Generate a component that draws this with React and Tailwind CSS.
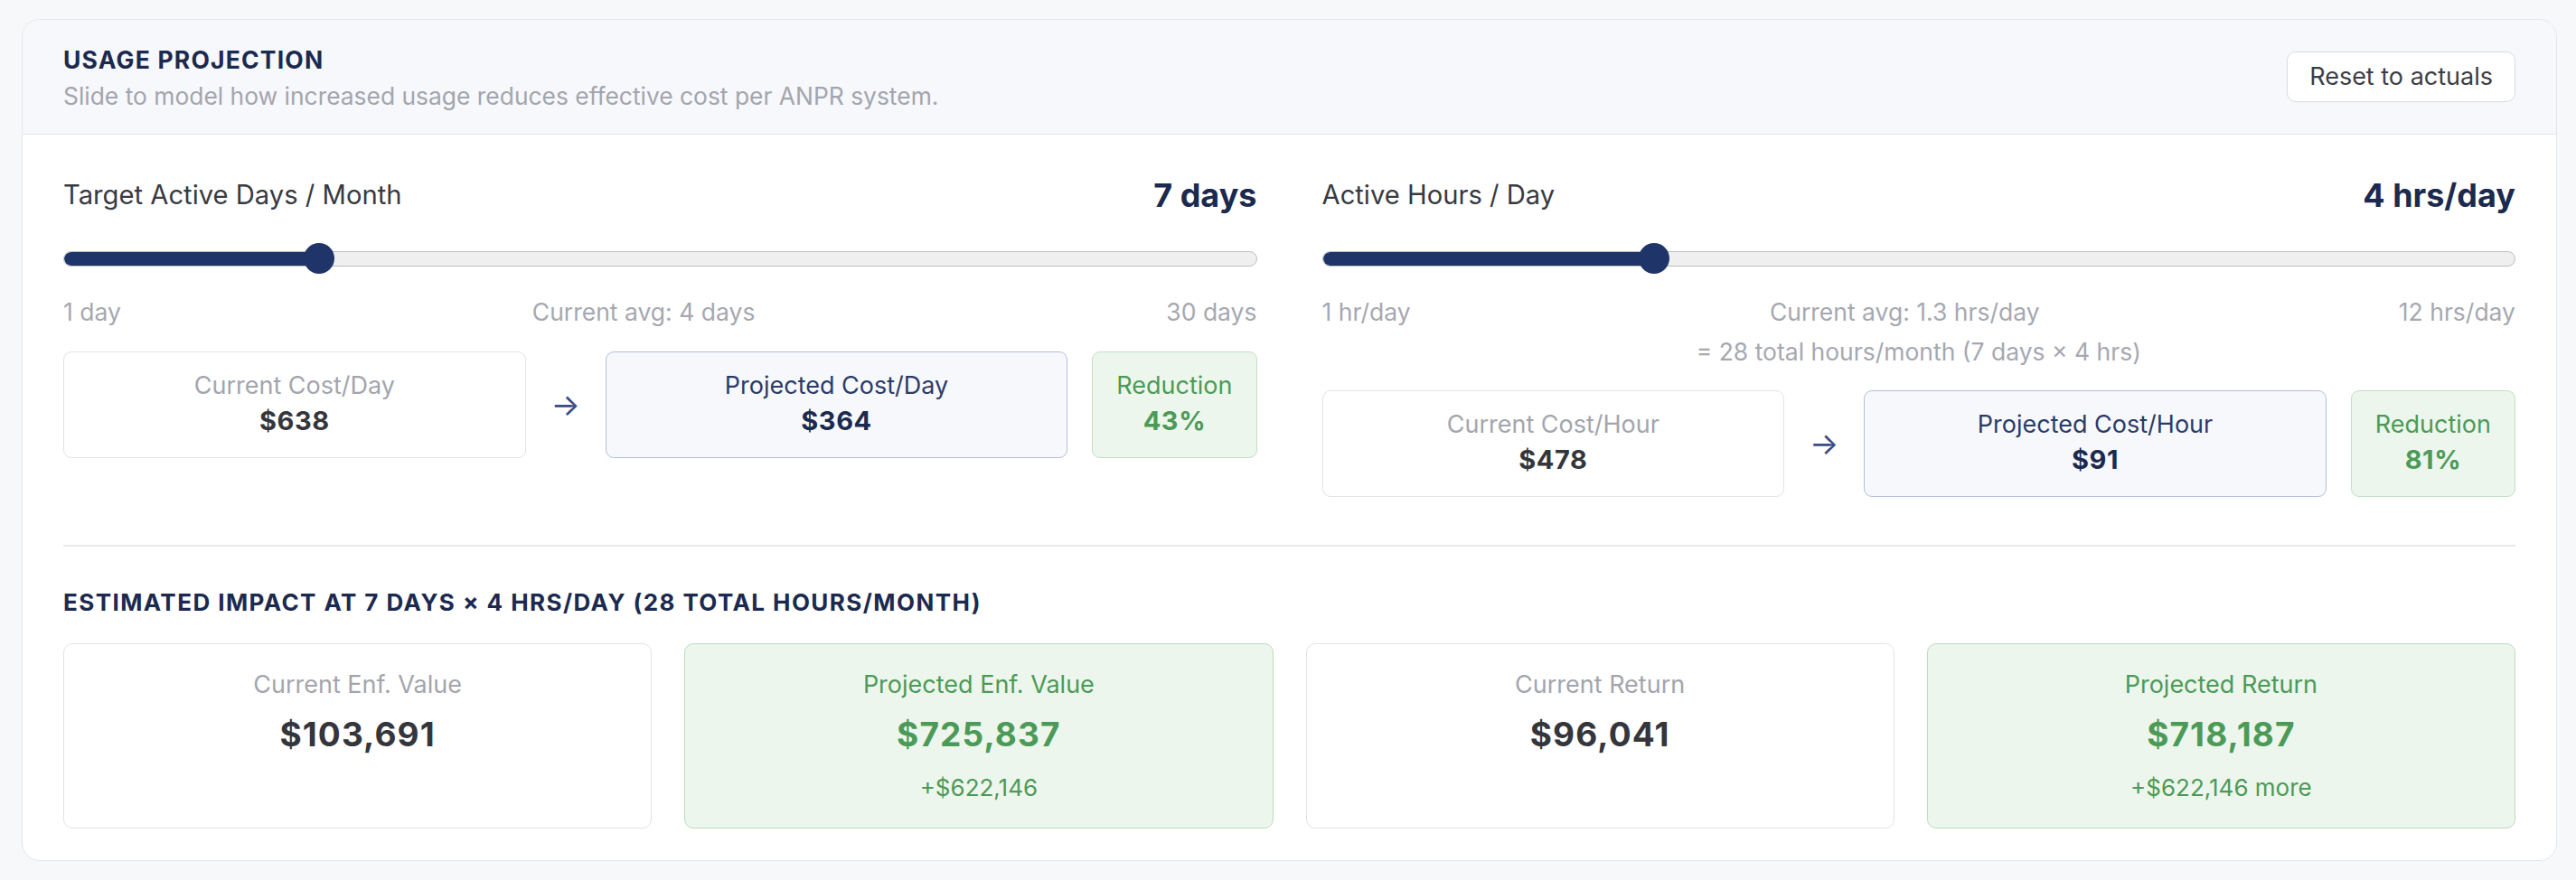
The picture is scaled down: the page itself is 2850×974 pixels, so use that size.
import React from "react";

function Slider({ pct }) {
  return (
    <div className="relative flex h-[34px] items-center">
      <div className="relative h-[17px] w-full overflow-hidden rounded-full border border-[#bcbcbc] bg-[#efefef]">
        <div
          className="h-full rounded-full bg-[#1f3468]"
          style={{ width: `calc(17px + ${pct} * (100% - 34px))` }}
        />
      </div>
      <div
        className="absolute top-0 h-[34px] w-[34px] rounded-full bg-[#1f3468]"
        style={{ left: `calc(${pct} * (100% - 34px))` }}
      />
    </div>
  );
}

function StatBox({ label, value, variant, grow = true }) {
  const styles = {
    current: "border-[#e3e3e6] bg-white",
    projected: "border-[#b3c0d9] bg-[#f6f8fc]",
    reduction: "border-[#c3dec4] bg-[#edf6ed]",
  };
  const labelC = {
    current: "text-[#a3a5ad]",
    projected: "text-[#2b3b68]",
    reduction: "text-[#4c9a57]",
  };
  const valueC = {
    current: "text-[#35363c]",
    projected: "text-[#1b2a4e]",
    reduction: "text-[#4c9a57]",
  };
  return (
    <div
      className={`${grow ? "flex-1" : "px-[26px]"} rounded-[9px] border pb-[20px] pt-[20px] text-center ${styles[variant]}`}
    >
      <div className={`text-[27px] leading-[34px] ${labelC[variant]}`}>{label}</div>
      <div className={`mt-[2px] text-[29px] font-bold leading-[40px] tracking-[0.02em] ${valueC[variant]}`}>{value}</div>
    </div>
  );
}

function SliderColumn({ label, value, pct, min, avg, max, extra, cur, proj, red }) {
  return (
    <div className="flex flex-col">
      <div className="flex h-[40px] items-center justify-between">
        <span className="text-[29.2px] leading-[40px] text-[#383a42]">{label}</span>
        <span className="text-[36px] font-bold leading-[40px] text-[#1b2a4e]">{value}</span>
      </div>
      <div className="mt-[33px]">
        <Slider pct={pct} />
      </div>
      <div className="mt-[25px] flex justify-between text-[26.5px] leading-[34px] text-[#a6a8b0]">
        <span>{min}</span>
        <span>{avg}</span>
        <span>{max}</span>
      </div>
      {extra && (
        <div className="mt-[10px] text-center text-[26.5px] leading-[34px] text-[#a6a8b0]">{extra}</div>
      )}
      <div className={`${extra ? "mt-[26px]" : "mt-[27px]"} flex items-center gap-[27px]`}>
        <StatBox label={cur[0]} value={cur[1]} variant="current" />
        <div className="w-[34px] text-center text-[34px] leading-[34px] text-[#3c4d85]">→</div>
        <StatBox label={proj[0]} value={proj[1]} variant="projected" />
        <StatBox label="Reduction" value={red} variant="reduction" grow={false} />
      </div>
    </div>
  );
}

function ImpactCard({ label, value, sub, green }) {
  return (
    <div
      className={`rounded-[10px] border px-[20px] pb-[27px] pt-[28px] text-center ${
        green ? "border-[#bddcbe] bg-[#edf6ed]" : "border-[#e2e3e6] bg-white"
      }`}
    >
      <div className={`text-[27px] leading-[34px] ${green ? "text-[#4c9a57]" : "text-[#a3a5ad]"}`}>{label}</div>
      <div
        className={`mt-[16px] text-[37px] font-bold leading-[44px] tracking-[0.03em] ${
          green ? "text-[#4c9a57]" : "text-[#35363c]"
        }`}
      >
        {value}
      </div>
      {sub && <div className="mt-[20px] text-[26px] leading-[34px] text-[#4c9a57]">{sub}</div>}
    </div>
  );
}

export default function App() {
  return (
    <div className="min-h-screen bg-[#f7f8fa] pb-[20px] pl-[24px] pr-[21px] pt-[21px] font-['Inter',sans-serif]">
      <div className="overflow-hidden rounded-[20px] border border-[#e3e5ea] bg-white">
        <header className="flex h-[127px] items-center justify-between border-b border-[#e3e5ea] bg-[#f7f8fc] px-[45px]">
          <div className="pt-[2px]">
            <h2 className="text-[26.5px] font-bold leading-[36px] tracking-[0.045em] text-[#1b2a4e]">USAGE PROJECTION</h2>
            <p className="mt-[4px] text-[26.4px] leading-[36px] text-[#a3a5ad]">
              Slide to model how increased usage reduces effective cost per ANPR system.
            </p>
          </div>
          <button className="h-[56px] rounded-[10px] border border-[#d8dadf] bg-white px-[24px] text-[27px] text-[#3c3e46]">
            Reset to actuals
          </button>
        </header>

        <div className="px-[45px] pb-[35px] pt-[47px]">
          <div className="grid grid-cols-2 gap-x-[72px]">
            <SliderColumn
              label="Target Active Days / Month"
              value="7 days"
              pct={6 / 29}
              min="1 day"
              avg="Current avg: 4 days"
              max="30 days"
              cur={["Current Cost/Day", "$638"]}
              proj={["Projected Cost/Day", "$364"]}
              red="43%"
            />
            <SliderColumn
              label="Active Hours / Day"
              value="4 hrs/day"
              pct={3 / 11}
              min="1 hr/day"
              avg="Current avg: 1.3 hrs/day"
              max="12 hrs/day"
              extra="= 28 total hours/month (7 days × 4 hrs)"
              cur={["Current Cost/Hour", "$478"]}
              proj={["Projected Cost/Hour", "$91"]}
              red="81%"
            />
          </div>

          <div className="mt-[53px] border-t-2 border-[#e8e9ec]" />

          <h3 className="mt-[45px] text-[26px] font-bold uppercase leading-[34px] tracking-[0.055em] text-[#1b2a4e]">
            Estimated Impact at 7 days × 4 hrs/day (28 total hours/month)
          </h3>

          <div className="mt-[28px] grid grid-cols-4 gap-[36px]">
            <ImpactCard label="Current Enf. Value" value="$103,691" />
            <ImpactCard label="Projected Enf. Value" value="$725,837" sub="+$622,146" green />
            <ImpactCard label="Current Return" value="$96,041" />
            <ImpactCard label="Projected Return" value="$718,187" sub="+$622,146 more" green />
          </div>
        </div>
      </div>
    </div>
  );
}
